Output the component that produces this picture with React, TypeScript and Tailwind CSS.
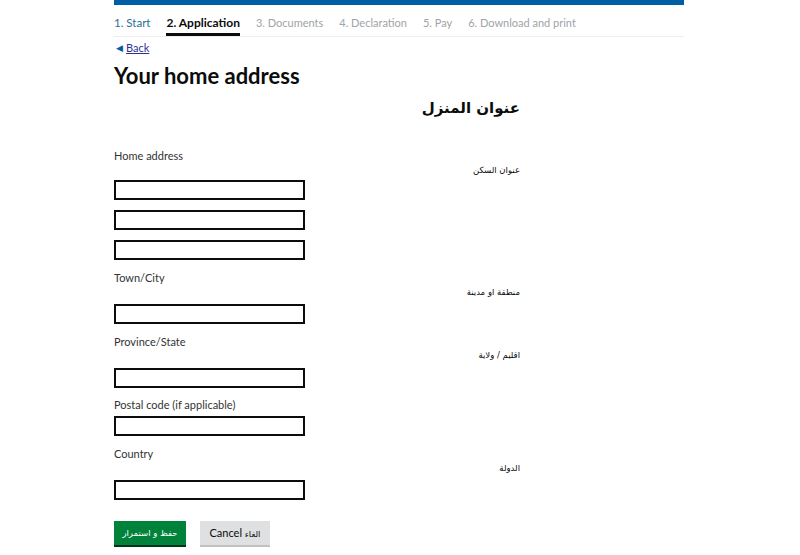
export default function App() {
  const steps = [
    { label: "1. Start", state: "done" },
    { label: "2. Application", state: "current" },
    { label: "3. Documents", state: "todo" },
    { label: "4. Declaration", state: "todo" },
    { label: "5. Pay", state: "todo" },
    { label: "6. Download and print", state: "todo" },
  ];

  const arabic = { fontFamily: '"DejaVu Sans", sans-serif' };

  return (
    <div className="min-h-screen bg-white text-[#0b0c0c]" style={{ fontFamily: "Lato, sans-serif" }}>
      <div className="ml-[114px] w-[570px]">
        <div className="h-[5px] bg-[#005ea5]" />

        <nav className="mt-[10px] flex items-end gap-[16px] border-b border-[#eeeeee] leading-[16px]">
          {steps.map((s) => (
            <span
              key={s.label}
              className={
                s.state === "current"
                  ? "border-b-[3px] border-[#0b0c0c] pb-[2px] text-[12px] font-bold text-[#0b0c0c]"
                  : s.state === "done"
                  ? "pb-[5px] text-[11.5px] text-[#2b6f96]"
                  : "pb-[5px] text-[11px] text-[#a0a4a6]"
              }
            >
              {s.label}
            </span>
          ))}
        </nav>

        <a href="#" className="ml-[2px] mt-[4px] flex items-center gap-[3px] text-[11px] leading-[14px] text-[#2e3191]">
          <span className="text-[9px] text-[#005ea5]">◀</span>
          <span className="underline">Back</span>
        </a>

        <h1 className="mt-[7px] text-[22px] font-bold leading-[28px]">Your home address</h1>

        <div className="w-[406px]">
          <h2 dir="rtl" className="mt-[5px] text-[15px] font-bold leading-[26px]" style={arabic}>
            عنوان المنزل
          </h2>

          <div className="mt-[27px] text-[11px] leading-[16px] text-[#333]">Home address</div>
          <div dir="rtl" className="mt-[-1px] text-[8.5px] leading-[14px]" style={arabic}>
            عنوان السكن
          </div>
          <div className="mt-[3px] flex flex-col gap-[10px]">
            <input className="h-[20px] w-[191px] border-2 border-[#0b0c0c]" />
            <input className="h-[20px] w-[191px] border-2 border-[#0b0c0c]" />
            <input className="h-[20px] w-[191px] border-2 border-[#0b0c0c]" />
          </div>

          <div className="mt-[10px] text-[11px] leading-[16px] text-[#333]">Town/City</div>
          <div dir="rtl" className="mt-[-1px] text-[8.5px] leading-[14px]" style={arabic}>
            منطقة او مدينة
          </div>
          <input className="mt-[5px] block h-[20px] w-[191px] border-2 border-[#0b0c0c]" />

          <div className="mt-[10px] text-[11px] leading-[16px] text-[#333]">Province/State</div>
          <div dir="rtl" className="mt-[-2px] text-[8.5px] leading-[14px]" style={arabic}>
            اقليم / ولاية
          </div>
          <input className="mt-[6px] block h-[20px] w-[191px] border-2 border-[#0b0c0c]" />

          <div className="mt-[9px] text-[11px] leading-[16px] text-[#333]">Postal code (if applicable)</div>
          <input className="mt-[3px] block h-[20px] w-[191px] border-2 border-[#0b0c0c]" />

          <div className="mt-[10px] text-[11px] leading-[16px] text-[#333]">Country</div>
          <div dir="rtl" className="mt-[-1px] text-[8.5px] leading-[14px]" style={arabic}>
            الدولة
          </div>
          <input className="mt-[5px] block h-[20px] w-[191px] border-2 border-[#0b0c0c]" />

          <div className="mt-[21px] flex gap-[14px]">
            <button
              className="h-[24px] w-[72px] bg-[#00823b] text-[8.5px] text-white shadow-[0_2px_0_#003618]"
              style={arabic}
            >
              حفظ و استمرار
            </button>
            <button className="h-[24px] w-[70px] bg-[#dee0e2] text-[11px] text-[#0b0c0c] shadow-[0_2px_0_#bfc1c3]">
              Cancel <span style={arabic} className="text-[8.5px]">الغاء</span>
            </button>
          </div>
        </div>
      </div>
    </div>
  );
}
